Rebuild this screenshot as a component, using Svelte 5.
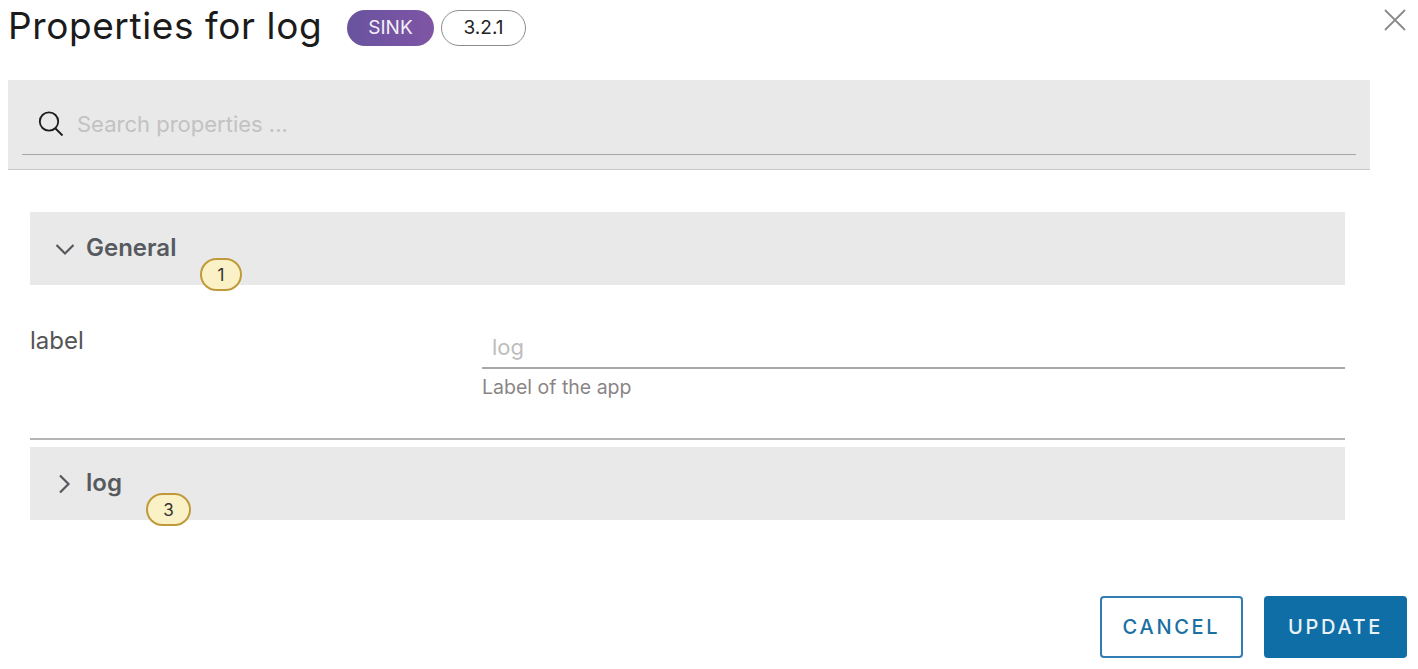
<script>
  const sections = [
    { name: 'General', open: true, count: 1, badgeLeft: 170, badgeWidth: 42 },
    { name: 'log', open: false, count: 3, badgeLeft: 116, badgeWidth: 45 }
  ];
</script>

<div class="dialog">
  <button class="close" aria-label="Close">
    <svg width="24" height="24" viewBox="0 0 24 24" fill="none" stroke="#8a8a8a" stroke-width="1.8">
      <path d="M2 2 L22 22 M22 2 L2 22" />
    </svg>
  </button>

  <header class="title-row">
    <h1>Properties for log</h1>
    <span class="pill sink">SINK</span>
    <span class="pill version">3.2.1</span>
  </header>

  <div class="search">
    <div class="search-inner">
      <svg width="26" height="26" viewBox="0 0 26 26" fill="none" stroke="#1c1c1c" stroke-width="1.8">
        <circle cx="11" cy="10.5" r="9.2" />
        <path d="M17.5 17.5 L24.5 24.5" />
      </svg>
      <span class="placeholder">Search properties ...</span>
    </div>
  </div>

  <div class="sections">
    {#each sections as section}
      <section class="group">
        <div class="group-head">
          <svg class="chevron" width="20" height="20" viewBox="0 0 20 20" fill="none" stroke="#55595d" stroke-width="2.2">
            {#if section.open}
              <path d="M1.5 6 L10 14.5 L18.5 6" />
            {:else}
              <path d="M5 1.5 L13.5 10 L5 18.5" />
            {/if}
          </svg>
          <span class="group-name">{section.name}</span>
          <span class="count" style="left: {section.badgeLeft}px; width: {section.badgeWidth}px">{section.count}</span>
        </div>
        {#if section.open}
          <div class="field">
            <div class="field-label">label</div>
            <div class="field-control">
              <div class="input">log</div>
              <div class="hint">Label of the app</div>
            </div>
          </div>
        {/if}
      </section>
    {/each}
  </div>

  <footer class="actions">
    <button class="btn outline">CANCEL</button>
    <button class="btn solid">UPDATE</button>
  </footer>
</div>

<style>
  :global(body) {
    margin: 0;
    background: #fff;
  }

  .dialog {
    position: relative;
    width: 1418px;
    height: 669px;
    box-sizing: border-box;
    overflow: hidden;
    font-family: "Inter", "Liberation Sans", sans-serif;
    color: #1b1b1b;
  }

  .close {
    position: absolute;
    left: 1383px;
    top: 8px;
    width: 24px;
    height: 24px;
    padding: 0;
    border: none;
    background: none;
  }

  .title-row {
    display: flex;
    align-items: center;
    height: 55px;
    padding-left: 8px;
  }

  h1 {
    margin: 0 25px 0 0;
    width: 314px;
    flex: none;
    font-size: 37px;
    font-weight: 400;
    letter-spacing: 0.6px;
    line-height: 51px;
    padding-bottom: 4px;
    white-space: nowrap;
  }

  .pill {
    display: flex;
    align-items: center;
    justify-content: center;
    box-sizing: border-box;
    height: 36px;
    border-radius: 18px;
    font-size: 19px;
  }

  .sink {
    width: 87px;
    margin-right: 7px;
    background: linear-gradient(90deg, #68539f, #7f55a5);
    color: #f4eff8;
  }

  .version {
    width: 85px;
    border: 1px solid #8c8c8c;
    color: #222;
  }

  .search {
    margin: 25px 48px 0 8px;
    height: 90px;
    padding: 0 14px;
    box-sizing: border-box;
    background: #e9e9e9;
    border-bottom: 1px solid #c9c9c9;
  }

  .search-inner {
    display: flex;
    align-items: center;
    gap: 13px;
    height: 75px;
    box-sizing: border-box;
    padding: 14px 0 0 16px;
    border-bottom: 1px solid #a6a6a6;
  }

  .placeholder {
    font-size: 22px;
    color: #c2c2c2;
  }

  .sections {
    margin: 42px 73px 0 30px;
  }

  .group-head {
    position: relative;
    display: flex;
    align-items: center;
    gap: 11px;
    height: 73px;
    box-sizing: border-box;
    padding: 0 0 2px 25px;
    background: #e9e9e9;
  }

  .chevron {
    flex: none;
    margin-top: 3px;
  }

  .group-name {
    font-size: 24px;
    font-weight: 600;
    color: #565a5f;
  }

  .count {
    position: absolute;
    top: 46px;
    height: 33px;
    display: flex;
    align-items: center;
    justify-content: center;
    box-sizing: border-box;
    border: 2px solid #c09a3a;
    border-radius: 17px;
    background: #fbf1c6;
    font-size: 17px;
    color: #333;
  }

  .field {
    display: flex;
    height: 155px;
    box-sizing: border-box;
    margin-bottom: 7px;
    border-bottom: 2px solid #b4b4b4;
  }

  .field-label {
    width: 452px;
    flex: none;
    padding-top: 41px;
    font-size: 24px;
    line-height: 30px;
    color: #555;
  }

  .field-control {
    flex: 1;
    padding-top: 43px;
  }

  .input {
    height: 41px;
    box-sizing: border-box;
    padding-left: 10px;
    border-bottom: 2px solid #a8a8a8;
    font-size: 22px;
    line-height: 39px;
    color: #bdbdbd;
  }

  .hint {
    margin-top: 5px;
    font-size: 19.5px;
    line-height: 26px;
    color: #8a8585;
  }

  .actions {
    position: absolute;
    left: 1100px;
    top: 596px;
    display: flex;
    gap: 21px;
  }

  .btn {
    width: 143px;
    height: 62px;
    box-sizing: border-box;
    border-radius: 4px;
    font-family: inherit;
    font-size: 20px;
    font-weight: 500;
    letter-spacing: 2.7px;
  }

  .outline {
    background: #fff;
    border: 2px solid #2f7db3;
    color: #1a6fa3;
  }

  .solid {
    background: #0f6ea6;
    border: none;
    color: #e9f2f7;
  }
</style>
